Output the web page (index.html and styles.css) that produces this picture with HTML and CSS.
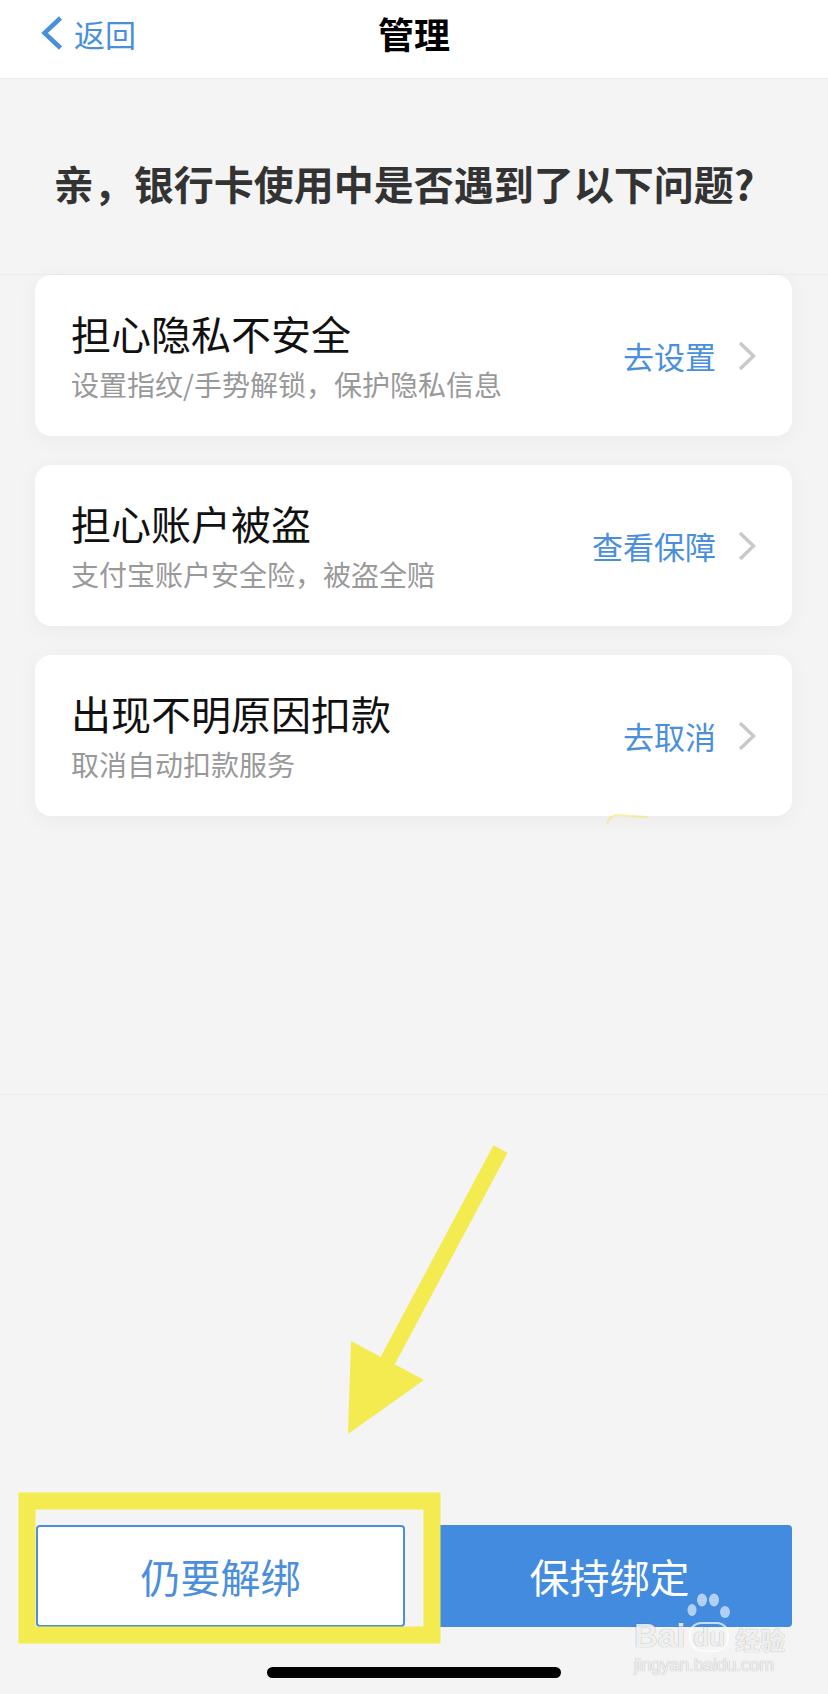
FILE: index.html
```html
<!DOCTYPE html>
<html lang="zh-CN">
<head>
    <meta charset="UTF-8">
    <meta name="viewport" content="width=device-width, initial-scale=1.0">
    <title>管理</title>
    <link rel="stylesheet" href="styles.css">
</head>
<body>
<div class="screen">
    <header class="nav">
        <a class="nav-back">
            <svg class="nav-back-icon" viewBox="0 0 22 34" width="22" height="34">
                <path d="M19.5 2 L3.5 17 L19.5 32" fill="none" stroke="currentColor" stroke-width="4.5"/>
            </svg>
            <span>返回</span>
        </a>
        <h1 class="nav-title">管理</h1>
        <div></div>
    </header>

    <section class="intro">
        <h2>亲，银行卡使用中是否遇到了以下问题?</h2>
    </section>

    <section class="issues">
        <div class="issue">
            <div class="issue-text">
                <div class="issue-title">担心隐私不安全</div>
                <div class="issue-desc">设置指纹/手势解锁，保护隐私信息</div>
            </div>
            <span class="issue-action">去设置</span>
            <svg class="chevron" viewBox="0 0 18 30" width="18" height="30">
                <path d="M2 2 L15.5 15 L2 28" fill="none" stroke="currentColor" stroke-width="3.5"/>
            </svg>
        </div>
        <div class="issue">
            <div class="issue-text">
                <div class="issue-title">担心账户被盗</div>
                <div class="issue-desc">支付宝账户安全险，被盗全赔</div>
            </div>
            <span class="issue-action">查看保障</span>
            <svg class="chevron" viewBox="0 0 18 30" width="18" height="30">
                <path d="M2 2 L15.5 15 L2 28" fill="none" stroke="currentColor" stroke-width="3.5"/>
            </svg>
        </div>
        <div class="issue">
            <div class="issue-text">
                <div class="issue-title">出现不明原因扣款</div>
                <div class="issue-desc">取消自动扣款服务</div>
            </div>
            <span class="issue-action">去取消</span>
            <svg class="chevron" viewBox="0 0 18 30" width="18" height="30">
                <path d="M2 2 L15.5 15 L2 28" fill="none" stroke="currentColor" stroke-width="3.5"/>
            </svg>
        </div>
    </section>

    <footer class="actions">
        <div class="buttons">
            <button class="btn btn-outline">仍要解绑</button>
            <button class="btn btn-primary">保持绑定</button>
        </div>
        <div class="home-bar"></div>
    </footer>

    <!-- yellow annotation drawn over the screenshot -->
    <svg class="marks" viewBox="0 0 828 1694" width="828" height="1694">
        <path d="M607 824 Q609 816 617 815 L648 817" fill="none" stroke="#f3ea52" stroke-width="2" opacity="0.55"/>
        <line x1="500.5" y1="1149" x2="387" y2="1362" stroke="#f4eb50" stroke-width="16"/>
        <polygon points="351,1341 424,1380 348,1434" fill="#f4eb50"/>
        <rect x="27" y="1501" width="405" height="134" fill="none" stroke="#f4eb50" stroke-width="17"/>
    </svg>

    <div class="watermark">
        <div class="wm-logo">
            <span class="wm-bai">Bai</span>
            <span class="wm-paw">
                <svg class="wm-toes" viewBox="0 0 44 30" width="44" height="30">
                    <ellipse cx="5" cy="17" rx="4.5" ry="6" />
                    <ellipse cx="15" cy="7" rx="5" ry="6.5" />
                    <ellipse cx="27" cy="7" rx="5" ry="6.5" />
                    <ellipse cx="38" cy="19" rx="5" ry="6" />
                </svg>
                <span class="wm-du">du</span>
            </span>
            <span class="wm-jy">经验</span>
        </div>
        <div class="wm-url">jingyan.baidu.com</div>
    </div>
</div>
</body>
</html>
```

FILE: styles.css
```css
body{
    margin: 0;
    padding: 0;
    font-family: "Noto Sans CJK SC", "Noto Sans", sans-serif;
    background: #f4f4f4;
}
.screen{
    position: relative;
    width: 828px;
    height: 1694px;
    overflow: hidden;
    display: flex;
    flex-direction: column;
    background: #f4f4f4;
}

/* top bar */
.nav{
    box-sizing: border-box;
    height: 79px;
    padding-bottom: 12px;
    background: #fff;
    border-bottom: 1px solid #ededed;
    display: grid;
    grid-template-columns: 1fr auto 1fr;
    align-items: center;
}
.nav-back{
    display: flex;
    align-items: center;
    gap: 11px;
    padding-left: 41px;
    color: #4a8fdc;
    font-size: 31px;
    line-height: 1;
}
.nav-back-icon{ display: block; }
.nav-title{
    margin: 0;
    font-size: 36px;
    font-weight: bold;
    line-height: 1;
    color: #000;
}

/* question */
.intro{
    padding: 80px 20px 67px 0;
    border-bottom: 1px solid #ececec;
}
.intro h2{
    margin: 0;
    text-align: center;
    font-size: 40px;
    line-height: 48px;
    font-weight: bold;
    color: #333;
}

/* cards */
.issues{
    display: flex;
    flex-direction: column;
    gap: 29px;
    padding: 0 36px 278px 35px;
    border-bottom: 1px solid #ececec;
}
.issue{
    display: flex;
    align-items: center;
    padding: 35px 36px 35px 36px;
    background: #fff;
    border-radius: 16px;
    box-shadow: 0 4px 22px rgba(0,0,0,0.045);
}
.issue-text{ flex: 1; }
.issue-title{
    font-size: 40px;
    line-height: 46px;
    color: #111;
}
.issue-desc{
    margin-top: 11px;
    font-size: 28px;
    line-height: 34px;
    color: #999;
}
.issue-action{
    font-size: 31px;
    color: #4a8fdc;
}
.chevron{
    margin-left: 22px;
    color: #c9c9c9;
    display: block;
}

/* bottom buttons */
.actions{
    flex: 1;
    display: flex;
    flex-direction: column;
    justify-content: flex-end;
    padding-bottom: 16px;
}
.buttons{
    display: flex;
    gap: 22px;
    padding: 0 36px;
}
.btn{
    flex: 1;
    height: 102px;
    font-family: inherit;
    font-size: 40px;
    border-radius: 4px;
    padding: 0;
}
.btn-outline{
    background: #fff;
    color: #4a8edc;
    border: 2px solid #4a8edc;
}
.btn-primary{
    background: #428bde;
    color: #fff;
    border: none;
}
.home-bar{
    align-self: center;
    width: 294px;
    height: 11px;
    margin-top: 40px;
    border-radius: 6px;
    background: #000;
}

/* overlays */
.marks{
    position: absolute;
    top: 0;
    left: 0;
    pointer-events: none;
}
.watermark{
    position: absolute;
    left: 634px;
    top: 1602px;
    font-family: "Liberation Sans", Arial, sans-serif;
    color: rgba(255,255,255,0.85);
    text-shadow: 0 0 1px rgba(0,0,0,0.25), 0 0 1px rgba(0,0,0,0.15);
    pointer-events: none;
}
.wm-logo{
    display: flex;
    align-items: flex-end;
    height: 50px;
}
.wm-bai{
    font-size: 33px;
    font-weight: bold;
    line-height: 1;
}
.wm-paw{
    position: relative;
    margin-left: 4px;
}
.wm-toes{
    position: absolute;
    left: -2px;
    top: -29px;
    fill: rgba(255,255,255,0.6);
}
.wm-du{
    display: inline-block;
    font-size: 26px;
    font-weight: bold;
    line-height: 1;
    padding: 0 2px;
    border: 2px solid rgba(255,255,255,0.7);
    border-radius: 12px 12px 14px 14px;
}
.wm-jy{
    margin-left: 6px;
    font-family: "Noto Sans CJK SC", sans-serif;
    font-size: 25px;
    font-weight: bold;
    line-height: 1;
}
.wm-url{
    font-size: 18px;
    line-height: 1;
    margin-top: 4px;
    letter-spacing: -0.3px;
}
```
